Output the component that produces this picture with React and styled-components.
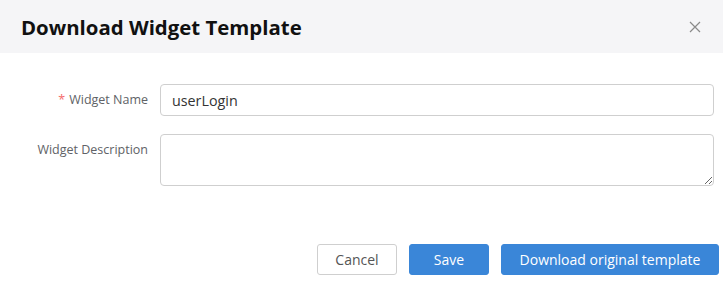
import React, { useState } from "react";
import styled, { createGlobalStyle } from "styled-components";

const GlobalStyle = createGlobalStyle`
  body {
    margin: 0;
    background: #fff;
    font-family: "Open Sans", "Noto Sans", sans-serif;
  }
`;

const Dialog = styled.div`
  width: 723px;
  height: 283px;
  background: #fff;
  display: flex;
  flex-direction: column;
`;

const Header = styled.div`
  height: 53px;
  background: #f5f5f7;
  display: flex;
  align-items: center;
  justify-content: space-between;
  padding: 0 21px 0 21px;
  box-sizing: border-box;
`;

const Title = styled.h2`
  margin: 0;
  font-size: 20.4px;
  font-weight: 700;
  color: #111;
`;

const CloseButton = styled.button`
  border: 0;
  background: none;
  padding: 0;
  width: 14px;
  height: 14px;
  display: flex;
  align-items: center;
  justify-content: center;
  cursor: pointer;
  svg {
    width: 12px;
    height: 12px;
  }
`;

const Body = styled.div`
  padding: 31px 9px 0 0;
  display: flex;
  flex-direction: column;
  gap: 18px;
`;

const Row = styled.div`
  display: grid;
  grid-template-columns: 148px 1fr;
  column-gap: 12px;
  align-items: start;
`;

const Label = styled.label`
  text-align: right;
  font-size: 12.5px;
  color: #606266;
  line-height: 32px;
`;

const Required = styled.span`
  color: #f56c6c;
  margin-right: 4px;
`;

const Input = styled.input`
  height: 32px;
  box-sizing: border-box;
  border: 1px solid #cfcfcf;
  border-radius: 4px;
  padding: 0 11px;
  font-family: inherit;
  font-size: 14.3px;
  color: #333;
  outline: none;
`;

const TextArea = styled.textarea`
  height: 52px;
  box-sizing: border-box;
  border: 1px solid #cfcfcf;
  border-radius: 4px;
  padding: 5px 11px;
  font-family: inherit;
  font-size: 14px;
  outline: none;
  resize: vertical;
`;

const Footer = styled.div`
  margin-top: auto;
  padding: 0 4px 8px 0;
  display: flex;
  justify-content: flex-end;
  gap: 12px;
`;

const Button = styled.button`
  height: 31px;
  width: ${(p) => (p.wide ? "218px" : "80px")};
  padding: 0;
  box-sizing: border-box;
  border-radius: 3px;
  font-family: inherit;
  font-size: 14px;
  cursor: pointer;
  border: 1px solid ${(p) => (p.primary ? "#3a86d8" : "#cfcfcf")};
  background: ${(p) => (p.primary ? "#3a86d8" : "#fff")};
  color: ${(p) => (p.primary ? "#fff" : "#555")};
`;

const App = () => {
  const [name, setName] = useState("userLogin");
  const [desc, setDesc] = useState("");

  return (
    <Dialog>
      <GlobalStyle />
      <Header>
        <Title>Download Widget Template</Title>
        <CloseButton aria-label="Close">
          <svg viewBox="0 0 12 12" fill="none" stroke="#8a8a8a" strokeWidth="1.2">
            <path d="M1 1L11 11M11 1L1 11" />
          </svg>
        </CloseButton>
      </Header>
      <Body>
        <Row>
          <Label>
            <Required>*</Required>Widget Name
          </Label>
          <Input value={name} onChange={(e) => setName(e.target.value)} />
        </Row>
        <Row>
          <Label>Widget Description</Label>
          <TextArea value={desc} onChange={(e) => setDesc(e.target.value)} />
        </Row>
      </Body>
      <Footer>
        <Button>Cancel</Button>
        <Button primary>Save</Button>
        <Button primary wide>
          Download original template
        </Button>
      </Footer>
    </Dialog>
  );
};

export default App;
